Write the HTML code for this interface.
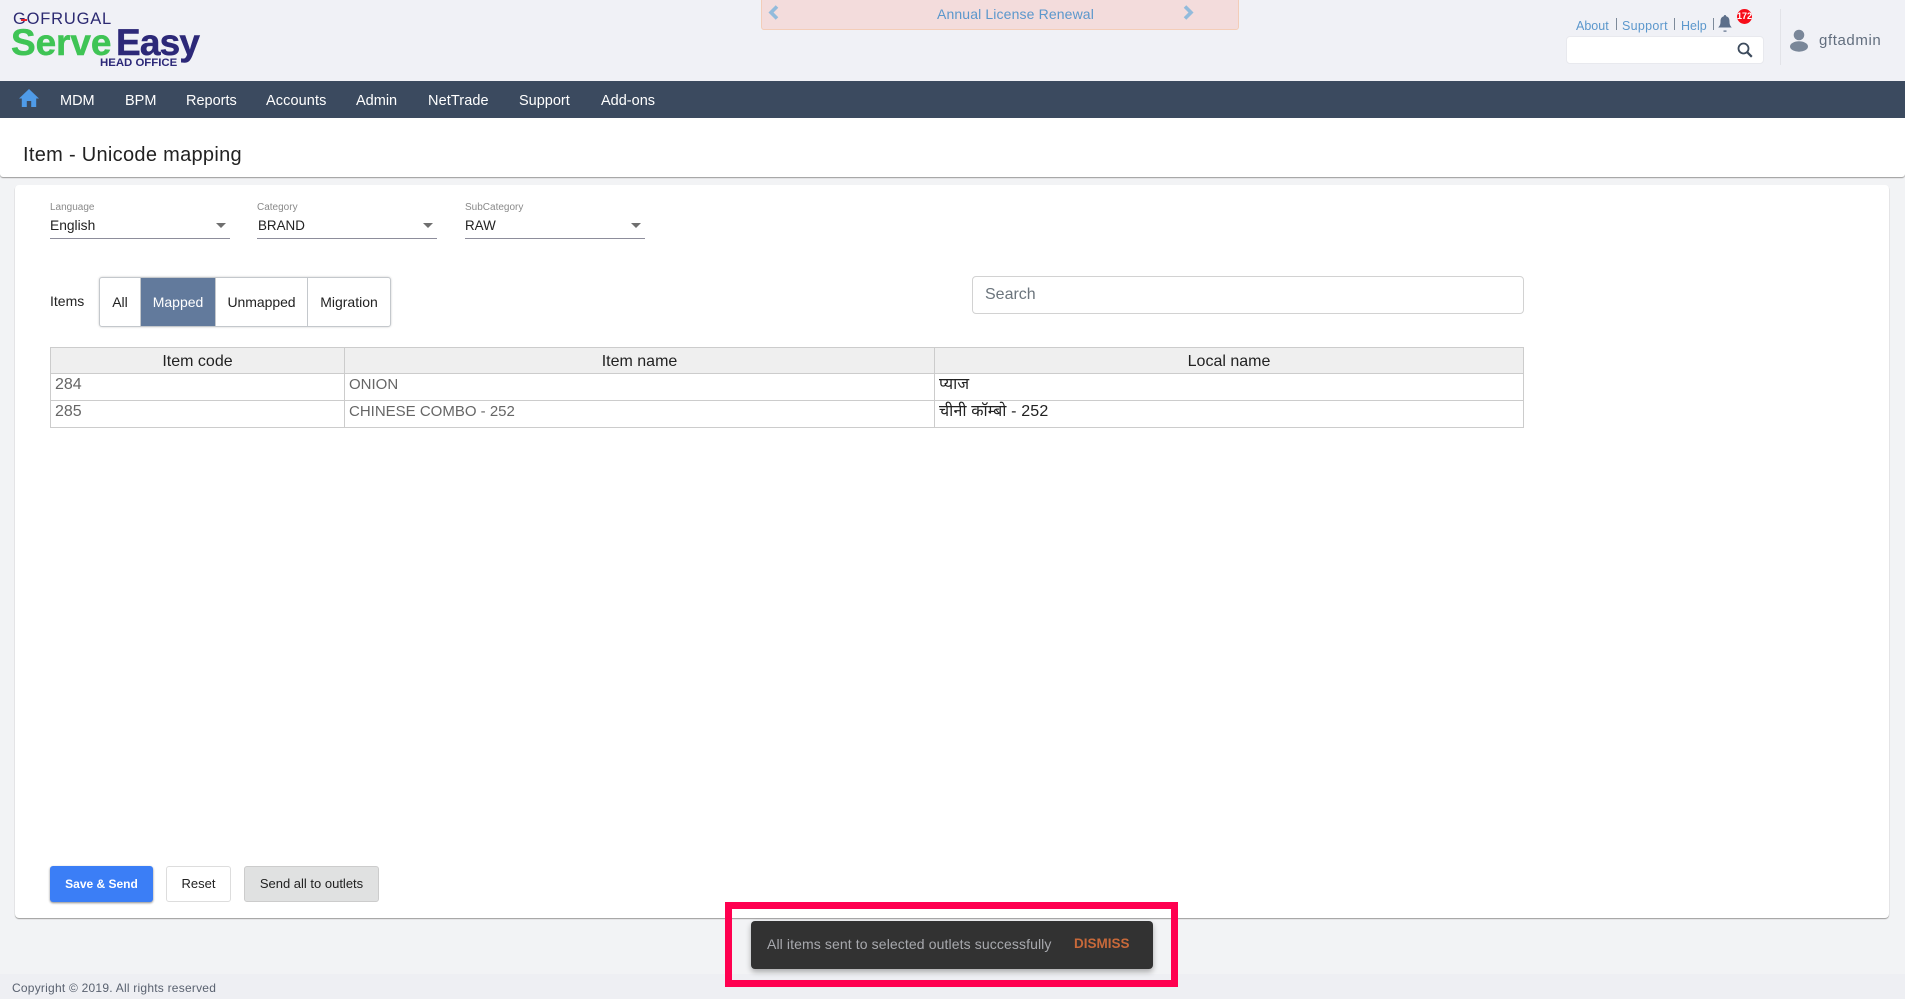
<!DOCTYPE html>
<html lang="en"><head><meta charset="utf-8"><title>Item - Unicode mapping</title>
<style>
*{box-sizing:border-box}
html,body{margin:0;padding:0;width:1905px;height:999px;overflow:hidden;background:#f2f3f5;font-family:"Liberation Sans",sans-serif;color:#222}
.a{position:absolute}
.t{position:absolute;white-space:nowrap;line-height:20px}
.nav{font-size:14.5px;color:#fff;top:91px}
.lbl{font-size:10px;color:#8a8a8a;top:198px}
.val{font-size:14px;color:#222;top:216px}
.ul{position:absolute;top:238px;width:180px;height:1px;background:#8d8d9b}
.car{position:absolute;top:223px;width:0;height:0;border-left:5.5px solid transparent;border-right:5.5px solid transparent;border-top:5.5px solid #6f6f6f}
.seg{position:absolute;top:0;height:48px;line-height:48px;text-align:center;font-size:14px;color:#222;border-right:1px solid #c4c8cc}
table{position:absolute;left:50px;top:347px;width:1473px;border-collapse:collapse;table-layout:fixed;font-size:16px}
th,td{border:1px solid #ccc;padding:0 4px;overflow:hidden;white-space:nowrap}
th{height:26px;background:#efefef;font-weight:400;color:#222;text-align:center;border-width:1.5px 1px;padding-top:2px}
td{height:27px;color:#666;vertical-align:top;line-height:22px;padding-top:0}
td.l{color:#222}
td.n{font-size:15px}
.btn{position:absolute;top:866px;height:36px;line-height:34px;border-radius:3px;text-align:center;font-size:13px}
</style></head><body>

<!-- header -->
<div class="a" style="left:0;top:0;width:1905px;height:81px;background:#f0f1f6"></div>
<div class="t" style="left:13px;top:9px;font-size:16.5px;letter-spacing:.8px;color:#2c2a72">GOFRUGAL</div>
<div class="a" style="left:21px;top:19px;width:6px;height:1.5px;background:#e8202a"></div>
<div class="t" style="left:11px;top:33px;font-size:37px;font-weight:700;color:#3fc455;letter-spacing:-.1px;-webkit-text-stroke:.5px #3fc455">Serve</div>
<div class="t" style="left:116px;top:33px;font-size:37px;font-weight:700;color:#2c2878;letter-spacing:-.8px;-webkit-text-stroke:.5px #2c2878">Easy</div>
<div class="t" style="left:100px;top:53px;font-size:11.4px;font-weight:700;color:#2c2878">HEAD OFFICE</div>

<div class="a" style="left:761px;top:-4px;width:478px;height:34px;background:#f3dcdc;border:1px solid #f3cdb8;border-radius:3px"></div>
<svg class="a" style="left:768px;top:5px" width="12" height="15" viewBox="0 0 12 15"><path d="M9 1.500 3 7.500l6 6" fill="none" stroke="#92bbdc" stroke-width="3.600"/></svg>
<svg class="a" style="left:1182px;top:5px" width="12" height="15" viewBox="0 0 12 15"><path d="M3 1.500l6 6-6 6" fill="none" stroke="#92bbdc" stroke-width="3.600"/></svg>
<div class="t" style="left:937px;top:4px;font-size:14px;color:#5b97cc;letter-spacing:.13px">Annual License Renewal</div>

<div class="t" style="left:1576px;top:16px;font-size:12.5px;color:#5b97cc">About</div>
<div class="a" style="left:1616px;top:18px;width:1px;height:12px;background:#7d8a9a"></div>
<div class="t" style="left:1622px;top:16px;font-size:12.5px;letter-spacing:.3px;color:#5b97cc">Support</div>
<div class="a" style="left:1674px;top:18px;width:1px;height:12px;background:#7d8a9a"></div>
<div class="t" style="left:1681px;top:16px;font-size:12.5px;color:#5b97cc">Help</div>
<div class="a" style="left:1713px;top:18px;width:1px;height:12px;background:#7d8a9a"></div>
<svg class="a" style="left:1718px;top:15px" width="14" height="17" viewBox="0 0 14 17"><path d="M7 0c.8 0 1.200.6 1.200 1.300C10.700 2 11.500 4 11.500 6.500c0 3.500 1 4.500 2.300 6H.2c1.300-1.500 2.300-2.500 2.300-6C2.500 4 3.300 2 5.800 1.300 5.800.6 6.200 0 7 0z" fill="#5d6f8a"/><rect x="5.500" y="15.500" width="3" height="1.200" fill="#5d6f8a"/></svg>
<div class="a" style="left:1737px;top:9px;width:15px;height:15px;border-radius:50%;background:#f70d1a;color:#fff;font-size:9px;font-weight:700;line-height:15px;text-align:center;overflow:hidden">172</div>
<div class="a" style="left:1566px;top:36px;width:198px;height:28px;background:#fff;border-radius:4px;border:1px solid #e8e9ee"></div>
<svg class="a" style="left:1737px;top:42px" width="16" height="16" viewBox="0 0 16 16"><circle cx="6.500" cy="6.500" r="5" fill="none" stroke="#3c4a5c" stroke-width="1.800"/><path d="M10.200 10.200l4.600 4.600" stroke="#3c4a5c" stroke-width="2.200"/></svg>
<div class="a" style="left:1780px;top:9px;width:1px;height:56px;background:#e2e3e8"></div>
<svg class="a" style="left:1790px;top:29px" width="18" height="23" viewBox="0 0 18 23"><circle cx="9" cy="6" r="5.300" fill="#7a8799"/><ellipse cx="9" cy="17.500" rx="9" ry="5.200" fill="#7a8799"/></svg>
<div class="t" style="left:1819px;top:31px;font-size:15px;color:#626e7e;letter-spacing:.6px">gftadmin</div>

<!-- nav -->
<div class="a" style="left:0;top:81px;width:1905px;height:37px;background:#3b4a5f"></div>
<svg class="a" style="left:19px;top:89px" width="20" height="18" viewBox="0 0 20 18"><path d="M10 0 0 9.500h2.800V18h5v-6h4.400v6h5V9.500H20z" fill="#4f9be8"/></svg>
<div class="t nav" style="left:60px">MDM</div>
<div class="t nav" style="left:125px">BPM</div>
<div class="t nav" style="left:186px">Reports</div>
<div class="t nav" style="left:266px;letter-spacing:.1px">Accounts</div>
<div class="t nav" style="left:356px">Admin</div>
<div class="t nav" style="left:428px;letter-spacing:.1px">NetTrade</div>
<div class="t nav" style="left:519px">Support</div>
<div class="t nav" style="left:601px">Add-ons</div>

<!-- title band -->
<div class="a" style="left:0;top:118px;width:1905px;height:59px;background:#fff;border-radius:0 0 3px 3px;box-shadow:0 1px 1px #9a9a9a"></div>
<div class="t" style="left:23px;top:145px;font-size:20px;letter-spacing:.3px;color:#222">Item - Unicode mapping</div>

<!-- card -->
<div class="a" style="left:15px;top:185px;width:1874px;height:733px;background:#fff;border-radius:4px;box-shadow:0 1px 1px #9a9a9a"></div>

<div class="t lbl" style="left:50px">Language</div>
<div class="t val" style="left:50px;font-size:13.8px">English</div>
<div class="ul" style="left:50px"></div><div class="car" style="left:216px"></div>
<div class="t lbl" style="left:257px">Category</div>
<div class="t val" style="left:258px;font-size:13.4px">BRAND</div>
<div class="ul" style="left:257px"></div><div class="car" style="left:423px"></div>
<div class="t lbl" style="left:465px">SubCategory</div>
<div class="t val" style="left:465px;font-size:13.4px">RAW</div>
<div class="ul" style="left:465px"></div><div class="car" style="left:631px"></div>

<div class="t" style="left:50px;top:291px;font-size:14px;color:#222">Items</div>
<div class="a" style="left:99px;top:277px;width:292px;height:50px;background:#fff;border:1px solid #c4c8cc;border-radius:3px;box-shadow:0 0 2px #ccc;overflow:hidden">
<div class="seg" style="left:0;width:41px">All</div>
<div class="seg" style="left:41px;width:75px;background:#627a9c;color:#fff">Mapped</div>
<div class="seg" style="left:116px;width:92px;letter-spacing:-.05px">Unmapped</div>
<div class="seg" style="left:208px;width:82px;border:0">Migration</div>
</div>

<div class="a" style="left:972px;top:276px;width:552px;height:38px;background:#fff;border:1px solid #d2d2d2;border-radius:4px"></div>
<div class="t" style="left:985px;top:285px;font-size:16px;color:#6c757d">Search</div>

<table>
<colgroup><col style="width:294px"><col style="width:590px"><col style="width:589px"></colgroup>
<tr><th>Item code</th><th>Item name</th><th>Local name</th></tr>
<tr><td>284</td><td class="n">ONION</td><td class="l">प्याज</td></tr>
<tr><td>285</td><td class="n">CHINESE COMBO - 252</td><td class="l" style="letter-spacing:.15px">चीनी कॉम्बो - 252</td></tr>
</table>

<div class="btn" style="left:50px;width:103px;background:#3b7ef6;color:#fff;font-weight:700;font-size:12px;line-height:36px;box-shadow:0 1px 2px #888">Save &amp; Send</div>
<div class="btn" style="left:166px;width:65px;background:#fff;border:1px solid #ddd;color:#222">Reset</div>
<div class="btn" style="left:244px;width:135px;background:#e0e1e1;border:1px solid #ccc;color:#222">Send all to outlets</div>

<!-- footer -->
<div class="a" style="left:0;top:974px;width:1905px;height:25px;background:#eeeff3"></div>
<div class="t" style="left:12px;top:978px;font-size:12px;color:#5a6270;letter-spacing:.23px">Copyright © 2019. All rights reserved</div>

<!-- toast + highlight -->
<div class="a" style="left:725px;top:902px;width:453px;height:85px;border:7px solid #ff0050"></div>
<div class="a" style="left:751px;top:921px;width:402px;height:48px;background:#323232;border-radius:4px;box-shadow:0 3px 6px rgba(0,0,0,.3)"></div>
<div class="t" style="left:767px;top:934px;font-size:14px;letter-spacing:.11px;color:#a8a9ae">All items sent to selected outlets successfully</div>
<div class="t" style="left:1074px;top:934px;font-size:13.5px;font-weight:700;color:#c8693a">DISMISS</div>
</body></html>
